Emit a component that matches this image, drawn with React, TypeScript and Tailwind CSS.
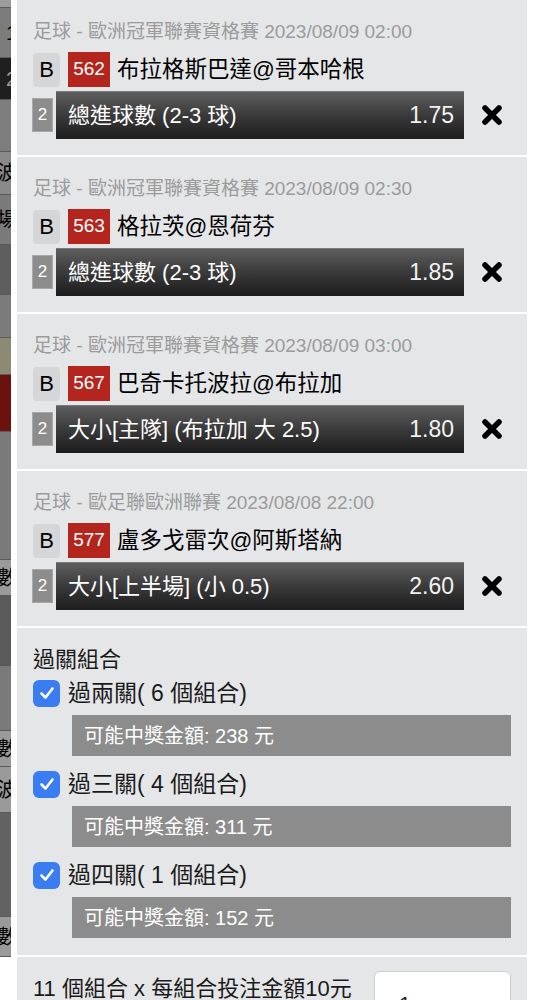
import type { ReactNode } from "react";

type Bet = {
  league: string;
  time: string;
  code: string;
  match: string;
  pick: string;
  odds: string;
};

const bets: Bet[] = [
  { league: "足球 - 歐洲冠軍聯賽資格賽", time: "2023/08/09 02:00", code: "562", match: "布拉格斯巴達@哥本哈根", pick: "總進球數 (2-3 球)", odds: "1.75" },
  { league: "足球 - 歐洲冠軍聯賽資格賽", time: "2023/08/09 02:30", code: "563", match: "格拉茨@恩荷芬", pick: "總進球數 (2-3 球)", odds: "1.85" },
  { league: "足球 - 歐洲冠軍聯賽資格賽", time: "2023/08/09 03:00", code: "567", match: "巴奇卡托波拉@布拉加", pick: "大小[主隊] (布拉加 大 2.5)", odds: "1.80" },
  { league: "足球 - 歐足聯歐洲聯賽", time: "2023/08/08 22:00", code: "577", match: "盧多戈雷次@阿斯塔納", pick: "大小[上半場] (小 0.5)", odds: "2.60" },
];

const combos = [
  { label: "過兩關( 6 個組合)", amount: "可能中獎金額: 238 元" },
  { label: "過三關( 4 個組合)", amount: "可能中獎金額: 311 元" },
  { label: "過四關( 1 個組合)", amount: "可能中獎金額: 152 元" },
];

// background page peeking out on the left
const strip: { h: number; bg: string; text?: string; color?: string }[] = [
  { h: 8, bg: "bg-[#9c9c9c]" },
  { h: 50, bg: "bg-[#7c7c7c]", text: "1", color: "text-black" },
  { h: 42, bg: "bg-[#1f1f1f]", text: "2", color: "text-[#9a9a9a]" },
  { h: 52, bg: "bg-[#7e7e7e]", text: "]", color: "text-black" },
  { h: 43, bg: "bg-[#8a8a8a]", text: "波", color: "text-black" },
  { h: 50, bg: "bg-[#7a7a7a]", text: "場", color: "text-black" },
  { h: 50, bg: "bg-[#5e5e5e]" },
  { h: 43, bg: "bg-[#7b7b7b]" },
  { h: 37, bg: "bg-[#8c8a74]" },
  { h: 57, bg: "bg-[#6b120e]" },
  { h: 128, bg: "bg-[#7a7a7a]" },
  { h: 36, bg: "bg-[#9a9a9a]", text: "數", color: "text-black" },
  { h: 70, bg: "bg-[#5a5a5a]" },
  { h: 65, bg: "bg-[#7a7a7a]" },
  { h: 36, bg: "bg-[#9a9a9a]", text: "數", color: "text-black" },
  { h: 46, bg: "bg-[#9a9a9a]", text: "波", color: "text-black" },
  { h: 104, bg: "bg-[#626262]" },
  { h: 40, bg: "bg-[#9a9a9a]", text: "數", color: "text-black" },
];

function CloseIcon() {
  return (
    <svg width="22" height="22" viewBox="0 0 22 22">
      <path d="M4 4 L18 18 M18 4 L4 18" stroke="#000" strokeWidth="5.5" strokeLinecap="round" />
    </svg>
  );
}

function Check() {
  return (
    <div className="flex h-[27px] w-[27px] items-center justify-center rounded-[6px] bg-[#3a7cf2]">
      <svg width="18" height="18" viewBox="0 0 18 18">
        <path d="M3.5 9.5 L7.5 13.5 L14.5 4.5" fill="none" stroke="#fff" strokeWidth="2.6" strokeLinecap="round" strokeLinejoin="round" />
      </svg>
    </div>
  );
}

function Section({ children, className = "" }: { children: ReactNode; className?: string }) {
  return <div className={`shrink-0 bg-[#e5e6e8] px-4 ${className}`}>{children}</div>;
}

function BetCard({ bet }: { bet: Bet }) {
  return (
    <Section className="h-[155px] pt-[20px]">
      <div className="h-6 text-[19px] leading-6 text-[#9b9b9b] whitespace-nowrap">
        {bet.league} {bet.time}
      </div>
      <div className="mt-[8px] flex h-[35px] items-center">
        <div className="flex h-[34px] w-[27px] items-center justify-center rounded-[4px] bg-[#d5d6d8] text-[22px] text-black">
          B
        </div>
        <div className="ml-2 flex h-[35px] w-[42px] items-center justify-center bg-[#b3251d] text-[19px] text-white">
          {bet.code}
        </div>
        <div className="ml-[7px] text-[22.5px] text-black whitespace-nowrap">{bet.match}</div>
      </div>
      <div className="mt-1 flex h-12 items-center">
        <div className="-ml-px flex h-[34px] w-[21px] items-center justify-center border border-[#a8a8a8] bg-[#8c8c8c] text-[17px] text-white">
          2
        </div>
        <div className="ml-[3px] flex h-12 w-[408px] items-center justify-between border-t border-[#7a7a7a] bg-linear-to-b from-[#5e5e5e] via-[#3a3a3a] to-[#1d1d1d] pl-3 pr-[10px] text-[22px] text-white whitespace-nowrap">
          <span>{bet.pick}</span>
          <span className="text-[23px] text-[#f2f2f2]">{bet.odds}</span>
        </div>
        <div className="ml-[17px] flex items-center">
          <CloseIcon />
        </div>
      </div>
    </Section>
  );
}

export default function App() {
  return (
    <div className="flex h-[1000px] w-[534px] overflow-hidden bg-white font-['Liberation_Sans','Noto_Sans_CJK_TC',sans-serif]">
      <div className="flex w-[11px] shrink-0 flex-col overflow-hidden">
        {strip.map((s, i) => (
          <div
            key={i}
            style={{ height: s.h }}
            className={`flex shrink-0 items-center justify-end overflow-hidden border-b border-[#5a5a5a] ${s.bg}`}
          >
            {s.text && <span className={`-mr-[6px] text-[20px] leading-none ${s.color}`}>{s.text}</span>}
          </div>
        ))}
      </div>
      <div className="ml-[6px] flex w-[510px] shrink-0 flex-col gap-[2px]">
        {bets.map((b) => (
          <BetCard key={b.code} bet={b} />
        ))}
        <Section className="pt-4 pb-[17px]">
          <div className="h-8 text-[22px] leading-8 text-[#1a1a1a]">過關組合</div>
          {combos.map((c, i) => (
            <div key={i} className={i === 0 ? "mt-[2px]" : "mt-[13px]"}>
              <div className="flex h-[30px] items-center">
                <Check />
                <span className="ml-2 text-[23px] text-[#1a1a1a] whitespace-nowrap">{c.label}</span>
              </div>
              <div className="ml-[39px] mt-[7px] flex h-[41px] items-center bg-[#8c8c8c] pl-3 text-[20px] text-white">
                {c.amount}
              </div>
            </div>
          ))}
        </Section>
        <Section className="flex flex-1 items-start gap-[22px] pt-[14px]">
          <div className="mt-[2px] text-[22px] leading-8 text-[#1a1a1a] whitespace-nowrap">
            11 個組合 x 每組合投注金額10元
          </div>
          <div className="h-[50px] w-[137px] rounded-[6px] border border-[#cfcfcf] bg-white pl-6 pt-4 text-[22px] text-[#222]">
            1
          </div>
        </Section>
      </div>
    </div>
  );
}
